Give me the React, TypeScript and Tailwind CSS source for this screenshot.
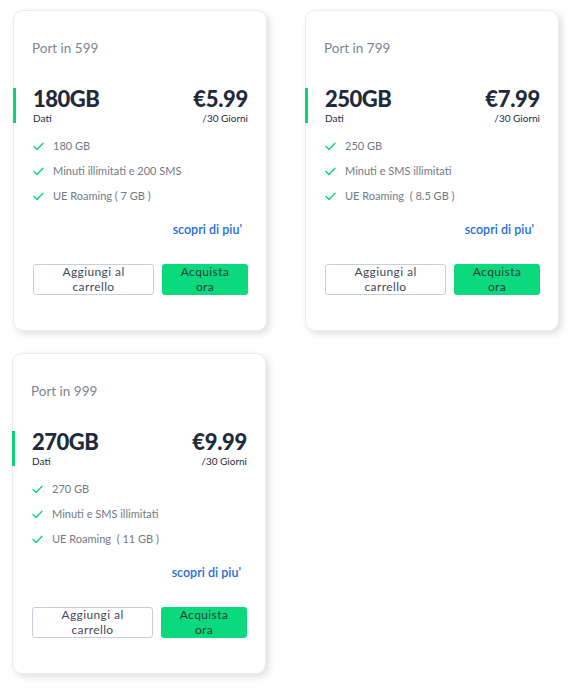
import React from "react";

type Plan = { port: string; gb: string; price: string; features: string[] };

const plans: Plan[] = [
  { port: "Port in 599", gb: "180GB", price: "€5.99", features: ["180 GB", "Minuti illimitati e 200 SMS", "UE Roaming ( 7 GB )"] },
  { port: "Port in 799", gb: "250GB", price: "€7.99", features: ["250 GB", "Minuti e SMS illimitati", "UE Roaming  ( 8.5 GB )"] },
  { port: "Port in 999", gb: "270GB", price: "€9.99", features: ["270 GB", "Minuti e SMS illimitati", "UE Roaming  ( 11 GB )"] },
];

function Check() {
  return (
    <svg width="11" height="9" viewBox="0 0 11 9" fill="none" className="shrink-0">
      <path d="M1 4.5 L4 7.5 L10 1.2" stroke="#10d47e" strokeWidth="1.4" strokeLinecap="round" strokeLinejoin="round" />
    </svg>
  );
}

function Card({ p, shift }: { p: Plan; shift?: boolean }) {
  return (
    <div className={`${shift ? "-ml-[1px]" : ""} w-[254px] h-[321px] bg-white border border-[#ececec] rounded-[10px] shadow-[3px_3px_7px_rgba(0,0,0,0.13)] pt-[28px] px-[18px] flex flex-col`}>
      <div className="text-[13.5px] leading-[18px] text-[#7d8593] whitespace-pre">{p.port}</div>
      <div className="mt-[31px] -ml-[19px] pl-[17px] border-l-[3px] border-[#0dd27c] flex justify-between h-[35px]">
        <div className="flex flex-col">
          <div className="text-[22px] leading-[22px] font-black text-[#1f2b3a] tracking-[-0.5px]">{p.gb}</div>
          <div className="mt-[2px] text-[10px] leading-[12px] text-[#1f2b3a]">Dati</div>
        </div>
        <div className="flex flex-col items-end">
          <div className="text-[22px] leading-[22px] font-black text-[#1f2b3a] tracking-[-0.3px]">{p.price}</div>
          <div className="mt-[2px] text-[10px] leading-[12px] text-[#1f2b3a]">/30 Giorni</div>
        </div>
      </div>
      <div className="mt-[11px] flex flex-col">
        {p.features.map((f) => (
          <div key={f} className="h-[25px] flex items-center gap-[9px] pl-[1px]">
            <Check />
            <span className="text-[11px] text-[#727987] whitespace-pre">{f}</span>
          </div>
        ))}
      </div>
      <div className="mt-[11px] h-[20px] flex items-center justify-end pr-[6px]">
        <span className="text-[12.5px] font-semibold text-[#1d6ce0]">scopri di piu'</span>
      </div>
      <div className="mt-[24px] flex gap-[8px] pl-[1px]">
        <button className="w-[121px] h-[31px] border border-[#c8cedb] rounded-[3px] bg-white text-[12px] leading-[14.5px] tracking-[0.4px] text-[#434a56]">
          Aggiungi al<br />carrello
        </button>
        <button className="w-[86px] h-[31px] rounded-[3px] bg-[#0bd97d] text-[12px] leading-[14.5px] tracking-[0.4px] text-[#2a3b3a]">
          Acquista<br />ora
        </button>
      </div>
    </div>
  );
}

export default function App() {
  return (
    <div className="w-[572px] h-[700px] bg-white pl-[13px] pt-[10px] font-['Lato',sans-serif]">
      <div className="grid grid-cols-[254px_254px] gap-x-[38px] gap-y-[22px]">
        {plans.map((p, i) => (
          <Card key={p.port} p={p} shift={i === 2} />
        ))}
      </div>
    </div>
  );
}
